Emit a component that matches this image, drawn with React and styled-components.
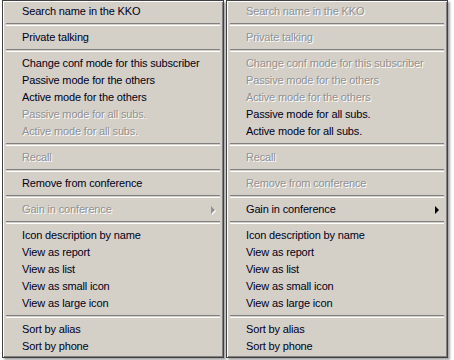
import React from "react";
import styled, { createGlobalStyle } from "styled-components";

const Global = createGlobalStyle`
  html, body { margin: 0; padding: 0; background: #ffffff; }
  body { font-family: "Liberation Sans", Arial, sans-serif; }
`;

const Page = styled.div`
  display: flex;
  align-items: flex-start;
  gap: 2px;
  padding-left: 2px;
  width: 454px;
  height: 360px;
  box-sizing: border-box;
  overflow: hidden;
`;

const Menu = styled.div`
  width: 222px;
  box-sizing: border-box;
  background: #d4d0c8;
  border: 1px solid #404040;
  box-shadow: inset 1px 1px 0 #ffffff, inset -1px -1px 0 #808080,
    2px 2px 2px rgba(0, 0, 0, 0.35);
  padding: 2px;
  display: flex;
  flex-direction: column;
`;

const Item = styled.div`
  position: relative;
  height: 17px;
  line-height: 17px;
  padding-left: 17px;
  font-size: 11px;
  letter-spacing: -0.15px;
  white-space: nowrap;
  color: ${(p) => (p.$disabled ? "#919191" : "#000018")};
  text-shadow: ${(p) => (p.$disabled ? "1px 1px 0 #ffffff" : "none")};
`;

const Arrow = styled.span`
  position: absolute;
  right: 6px;
  top: 5px;
  width: 0;
  height: 0;
  border-top: 4px solid transparent;
  border-bottom: 4px solid transparent;
  border-left: 4px solid ${(p) => (p.$disabled ? "#919191" : "#000000")};
  filter: ${(p) => (p.$disabled ? "drop-shadow(1px 1px 0 #ffffff)" : "none")};
`;

const Separator = styled.div`
  height: 9px;
  display: flex;
  align-items: center;
  padding: 0 1px;
  &::before {
    content: "";
    flex: 1;
    height: 1px;
    border-top: 1px solid #808080;
    border-bottom: 1px solid #ffffff;
  }
`;

const S = "sep";

const leftItems = [
  { label: "Search name in the KKO" },
  S,
  { label: "Private talking" },
  S,
  { label: "Change conf mode for this subscriber" },
  { label: "Passive mode for the others" },
  { label: "Active mode for the others" },
  { label: "Passive mode for all subs.", disabled: true },
  { label: "Active mode for all subs.", disabled: true },
  S,
  { label: "Recall", disabled: true },
  S,
  { label: "Remove from conference" },
  S,
  { label: "Gain in conference", disabled: true, sub: true },
  S,
  { label: "Icon description by name" },
  { label: "View as report" },
  { label: "View as list" },
  { label: "View as small icon" },
  { label: "View as large icon" },
  S,
  { label: "Sort by alias" },
  { label: "Sort by phone" },
];

const rightItems = [
  { label: "Search name in the KKO", disabled: true },
  S,
  { label: "Private talking", disabled: true },
  S,
  { label: "Change conf mode for this subscriber", disabled: true },
  { label: "Passive mode for the others", disabled: true },
  { label: "Active mode for the others", disabled: true },
  { label: "Passive mode for all subs." },
  { label: "Active mode for all subs." },
  S,
  { label: "Recall", disabled: true },
  S,
  { label: "Remove from conference", disabled: true },
  S,
  { label: "Gain in conference", sub: true },
  S,
  { label: "Icon description by name" },
  { label: "View as report" },
  { label: "View as list" },
  { label: "View as small icon" },
  { label: "View as large icon" },
  S,
  { label: "Sort by alias" },
  { label: "Sort by phone" },
];

function ContextMenu({ items }) {
  return (
    <Menu>
      {items.map((it, i) =>
        it === S ? (
          <Separator key={i} />
        ) : (
          <Item key={i} $disabled={it.disabled}>
            {it.label}
            {it.sub && <Arrow $disabled={it.disabled} />}
          </Item>
        )
      )}
    </Menu>
  );
}

export default function App() {
  return (
    <>
      <Global />
      <Page>
        <ContextMenu items={leftItems} />
        <ContextMenu items={rightItems} />
      </Page>
    </>
  );
}
